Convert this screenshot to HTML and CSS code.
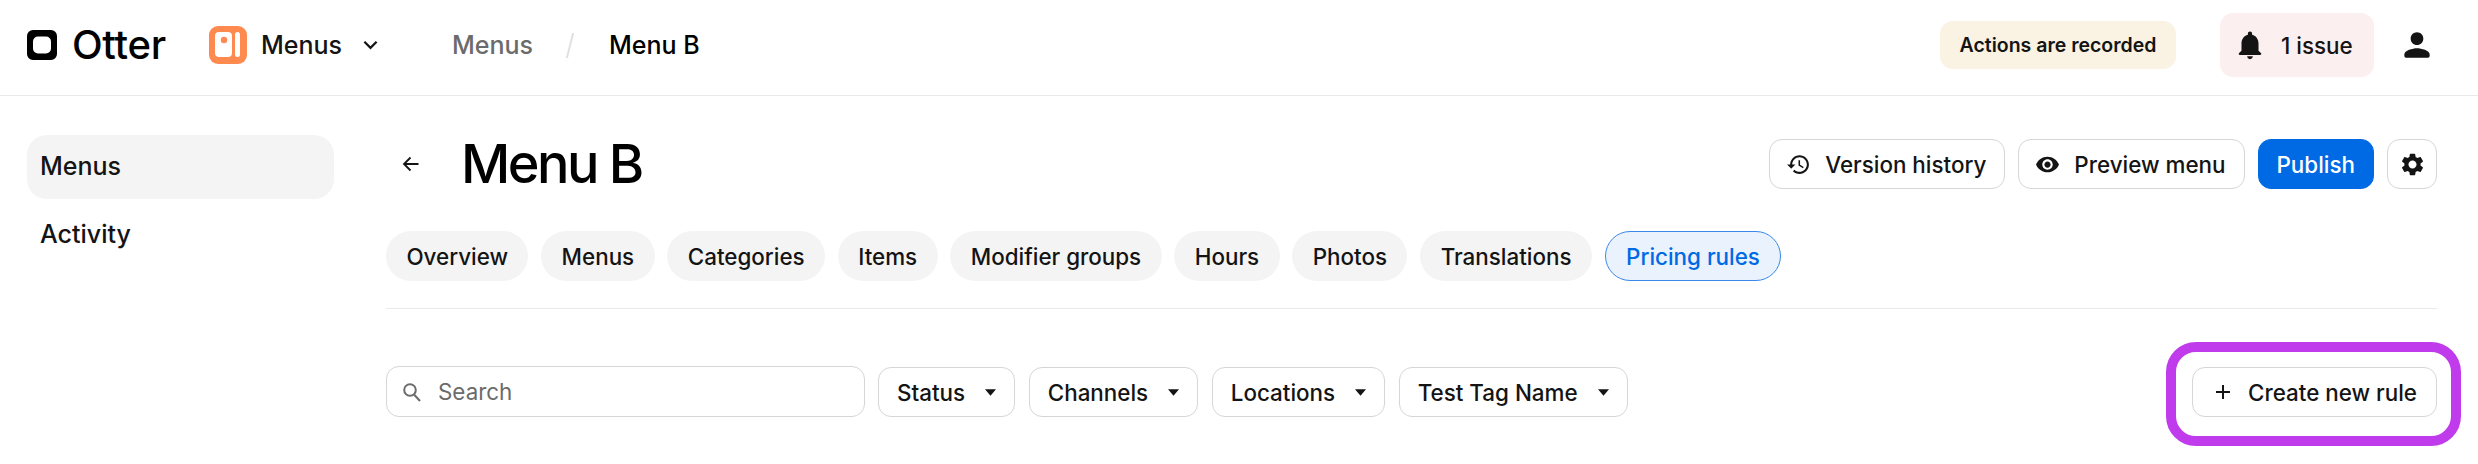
FILE: index.html
```html
<!DOCTYPE html>
<html lang="en">
<head>
<meta charset="utf-8">
<title>Menu B</title>
<link rel="stylesheet" href="styles.css">
</head>
<body>
<header class="topbar">
  <div class="brand">
    <svg class="brand-mark" viewBox="0 0 30 30"><path fill-rule="evenodd" fill="#000" d="M6 0h18a6 6 0 0 1 6 6v18a6 6 0 0 1-6 6H6a6 6 0 0 1-6-6V6a6 6 0 0 1 6-6zm5 6.500a5 5 0 0 0-5 5v7a5 5 0 0 0 5 5h8a5 5 0 0 0 5-5v-7a5 5 0 0 0-5-5z"/></svg>
    <span class="brand-name">Otter</span>
  </div>
  <div class="app-switch">
    <svg class="app-icon" viewBox="0 0 38 38"><rect width="38" height="38" rx="9" fill="#ff8a50"/><rect x="6" y="6" width="17" height="25" rx="4" fill="#fff"/><circle cx="15" cy="14" r="3.200" fill="#ff8a50"/><rect x="26" y="6" width="5" height="25" rx="2.500" fill="#fff"/></svg>
    <span class="app-name">Menus</span>
    <svg class="chev" viewBox="0 0 16 10"><path d="M1.500 1.500 8 8l6.500-6.500" fill="none" stroke="#141414" stroke-width="2.400"/></svg>
  </div>
  <nav class="crumbs">
    <span class="crumb-muted">Menus</span>
    <span class="crumb-sep"></span>
    <span class="crumb-current">Menu B</span>
  </nav>
  <div class="top-right">
    <span class="recorded">Actions are recorded</span>
    <span class="issue">
      <svg class="bell" viewBox="0 0 24 24"><path fill="#141414" d="M12 22c1.100 0 2-.9 2-2h-4c0 1.100.9 2 2 2zm6-6v-5c0-3.070-1.630-5.640-4.500-6.320V4c0-.83-.67-1.500-1.500-1.500s-1.500.67-1.500 1.500v.68C7.640 5.360 6 7.920 6 11v5l-1.700 1.700c-.63.63-.19 1.300.7 1.300h14c.89 0 1.330-.67.7-1.300z"/></svg>
      1 issue
    </span>
    <svg class="user" viewBox="0 0 24 24"><path fill="#141414" d="M12 12c2.210 0 4-1.790 4-4s-1.790-4-4-4-4 1.790-4 4 1.790 4 4 4zm0 2c-2.670 0-8 1.340-8 4v1c0 .55.45 1 1 1h14c.55 0 1-.45 1-1v-1c0-2.660-5.330-4-8-4z"/></svg>
  </div>
</header>
<div class="layout">
  <aside class="sidebar">
    <a class="side-item side-active">Menus</a>
    <a class="side-item">Activity</a>
  </aside>
  <main class="content">
    <div class="title-row">
      <svg class="back" viewBox="0 0 20 20"><path d="M17.500 10H3M9.500 3.500 3 10l6.500 6.500" fill="none" stroke="#141414" stroke-width="1.800"/></svg>
      <h1 class="title">Menu B</h1>
      <div class="actions">
        <button class="btn"><svg class="i24" viewBox="0 0 24 24"><path fill="#141414" d="M13 3c-4.970 0-9 4.030-9 9H1l3.890 3.890.07.14L9 12H6c0-3.870 3.130-7 7-7s7 3.130 7 7-3.130 7-7 7c-1.930 0-3.680-.79-4.940-2.060l-1.420 1.420C8.270 19.990 10.510 21 13 21c4.970 0 9-4.030 9-9s-4.030-9-9-9zm-1 5v5l4.280 2.540.72-1.210-3.500-2.080V8H12z"/></svg>Version history</button>
        <button class="btn"><svg class="i24" viewBox="0 0 24 24"><path fill="#141414" d="M12 4.500C7 4.500 2.730 7.610 1 12c1.730 4.390 6 7.500 11 7.500s9.270-3.110 11-7.500c-1.730-4.390-6-7.500-11-7.500zM12 17c-2.760 0-5-2.240-5-5s2.240-5 5-5 5 2.240 5 5-2.240 5-5 5zm0-8c-1.660 0-3 1.340-3 3s1.340 3 3 3 3-1.340 3-3-1.340-3-3-3z"/></svg>Preview menu</button>
        <button class="btn btn-primary">Publish</button>
        <button class="btn btn-icon"><svg class="gear" viewBox="0 0 24 24"><path fill="#141414" d="M19.140 12.940c.04-.3.06-.61.06-.94 0-.32-.02-.64-.07-.94l2.030-1.580c.18-.14.23-.41.12-.61l-1.920-3.320c-.12-.22-.37-.29-.59-.22l-2.390.96c-.5-.38-1.030-.7-1.620-.94l-.36-2.540c-.04-.24-.24-.41-.48-.41h-3.840c-.24 0-.43.17-.47.41l-.36 2.540c-.59.24-1.130.57-1.620.94l-2.390-.96c-.22-.08-.47 0-.59.22L2.740 8.870c-.12.21-.08.47.12.61l2.030 1.580c-.05.3-.09.63-.09.94s.02.64.07.94l-2.030 1.580c-.18.14-.23.41-.12.61l1.920 3.320c.12.22.37.29.59.22l2.390-.96c.5.38 1.030.7 1.620.94l.36 2.540c.05.24.24.41.48.41h3.840c.24 0 .44-.17.47-.41l.36-2.540c.59-.24 1.130-.56 1.620-.94l2.390.96c.22.08.47 0 .59-.22l1.920-3.320c.12-.22.07-.47-.12-.61l-2.010-1.580zM12 15.600c-1.980 0-3.600-1.620-3.600-3.600s1.620-3.600 3.600-3.600 3.600 1.620 3.600 3.600-1.620 3.600-3.600 3.600z"/></svg></button>
      </div>
    </div>
    <div class="tabs">
      <span class="tab">Overview</span>
      <span class="tab">Menus</span>
      <span class="tab">Categories</span>
      <span class="tab">Items</span>
      <span class="tab">Modifier groups</span>
      <span class="tab">Hours</span>
      <span class="tab">Photos</span>
      <span class="tab">Translations</span>
      <span class="tab tab-active">Pricing rules</span>
    </div>
    <div class="filters">
      <div class="search">
        <svg class="search-icon" viewBox="0 0 20 20"><circle cx="8" cy="8" r="5.800" fill="none" stroke="#6b6b6b" stroke-width="2"/><path d="m12 12.500 6 6.500" fill="none" stroke="#6b6b6b" stroke-width="2"/></svg>
        <span>Search</span>
      </div>
      <button class="btn filter">Status<svg class="caret" viewBox="0 0 12 7"><path fill="#141414" d="M0 0h12L6 7z"/></svg></button>
      <button class="btn filter">Channels<svg class="caret" viewBox="0 0 12 7"><path fill="#141414" d="M0 0h12L6 7z"/></svg></button>
      <button class="btn filter">Locations<svg class="caret" viewBox="0 0 12 7"><path fill="#141414" d="M0 0h12L6 7z"/></svg></button>
      <button class="btn filter">Test Tag Name<svg class="caret" viewBox="0 0 12 7"><path fill="#141414" d="M0 0h12L6 7z"/></svg></button>
      <div class="create-wrap">
        <button class="btn create"><svg class="plus" viewBox="0 0 16 16"><path d="M8 1v14M1 8h14" fill="none" stroke="#141414" stroke-width="2"/></svg>Create new rule</button>
        <span class="highlight"></span>
      </div>
    </div>
  </main>
</div>
</body>
</html>
```
FILE: styles.css
```css
* { box-sizing: border-box; }
html, body { margin: 0; height: 464px; overflow: hidden; background: #fff; }
body { font-family: Inter, "Liberation Sans", sans-serif; color: #141414; font-weight: 500; }
.topbar { height: 96px; border-bottom: 1px solid #e9e9e9; display: flex; align-items: center; padding: 0 44px 5px 27px; }
.brand { display: flex; align-items: center; gap: 15px; width: 182px; }
.brand-mark { width: 30px; height: 30px; }
.brand-name { font-size: 40px; line-height: 1; color: #000; letter-spacing: -.3px; }
.app-switch { display: flex; align-items: center; width: 243px; }
.app-icon { width: 38px; height: 38px; margin-right: 14px; }
.app-name { font-size: 25px; margin-right: 21px; }
.chev { width: 15px; height: 10px; }
.crumbs { display: flex; align-items: center; font-size: 25px; }
.crumb-muted { color: #6b6b6b; }
.crumb-sep { width: 2px; height: 25px; background: #e0e0e0; transform: skewX(-14deg); margin: 0 38px 0 36px; }
.crumb-current { color: #000; }
.top-right { margin-left: auto; display: flex; align-items: center; }
.recorded { height: 48px; width: 236px; border-radius: 13px; background: #faf2e2; font-size: 19.5px; font-weight: 600; display: flex; align-items: center; justify-content: center; margin-right: 44px; }
.issue { height: 64px; width: 154px; border-radius: 13px; background: #fcefef; font-size: 22.4px; display: flex; align-items: center; gap: 14px; padding-left: 13px; margin-right: 24px; }
.bell { width: 34px; height: 34px; flex: none; }
.gear { width: 27px; height: 27px; flex: none; }
.i24 { width: 25px; height: 25px; flex: none; }
.user { width: 38px; height: 38px; margin-right: -2px; }
.layout { display: flex; }
.sidebar { width: 386px; padding: 39px 0 0 27px; flex: none; display: flex; flex-direction: column; gap: 4px; }
.side-item { width: 307px; height: 64px; border-radius: 20px; display: flex; align-items: center; padding: 0 0 2px 13px; font-size: 25px; }
.side-active { background: #f4f4f4; }
.content { flex: 1; padding: 43px 41px 0 0; min-width: 0; }
.title-row { display: flex; align-items: center; height: 50px; }
.back { width: 20px; height: 20px; margin-left: 15px; }
.title { margin: 0 0 0 40px; font-size: 54px; font-weight: 500; line-height: 1; color: #000; letter-spacing: -2.500px; }
.actions { margin-left: auto; display: flex; gap: 13px; }
.btn { height: 50px; border: 1.500px solid #d6d6d6; border-radius: 13px; background: #fff; font: inherit; font-size: 22.4px; color: #141414; display: flex; align-items: center; gap: 14px; padding: 0 18px 0 16px; white-space: nowrap; }
.btn-primary { background: #0069e4; border-color: #0069e4; color: #fff; padding: 0 18px; }
.btn-icon { width: 50px; padding: 0; justify-content: center; }
.tabs { display: flex; gap: 12.8px; margin-top: 42px; padding-bottom: 27px; border-bottom: 1.500px solid #e9e9e9; }
.tab { height: 50px; padding: 0 20.4px; border-radius: 25px; background: #f4f4f4; font-size: 22.4px; display: flex; align-items: center; }
.tab-active { background: #e9f2fd; border: 1.500px solid #3a88e8; color: #0069e4; }
.filters { display: flex; gap: 13.6px; margin-top: 57px; align-items: flex-end; }
.search { width: 478.500px; height: 51px; border: 1.500px solid #d6d6d6; border-radius: 13px; display: flex; align-items: center; gap: 16px; padding-left: 15px; font-size: 22.4px; color: #6b6b6b; font-weight: 400; }
.search-icon { width: 20px; height: 20px; }
.filter { gap: 20px; padding: 0 18px; }
.caret { width: 11px; height: 7px; flex: none; }
.create-wrap { margin-left: auto; position: relative; }
.create { gap: 17px; padding: 0 19px 0 22px; }
.plus { width: 16px; height: 16px; flex: none; }
.highlight { position: absolute; left: -26px; top: -25px; right: -24px; bottom: -29px; border: 10px solid #bf3beb; border-radius: 30px; pointer-events: none; }
```
